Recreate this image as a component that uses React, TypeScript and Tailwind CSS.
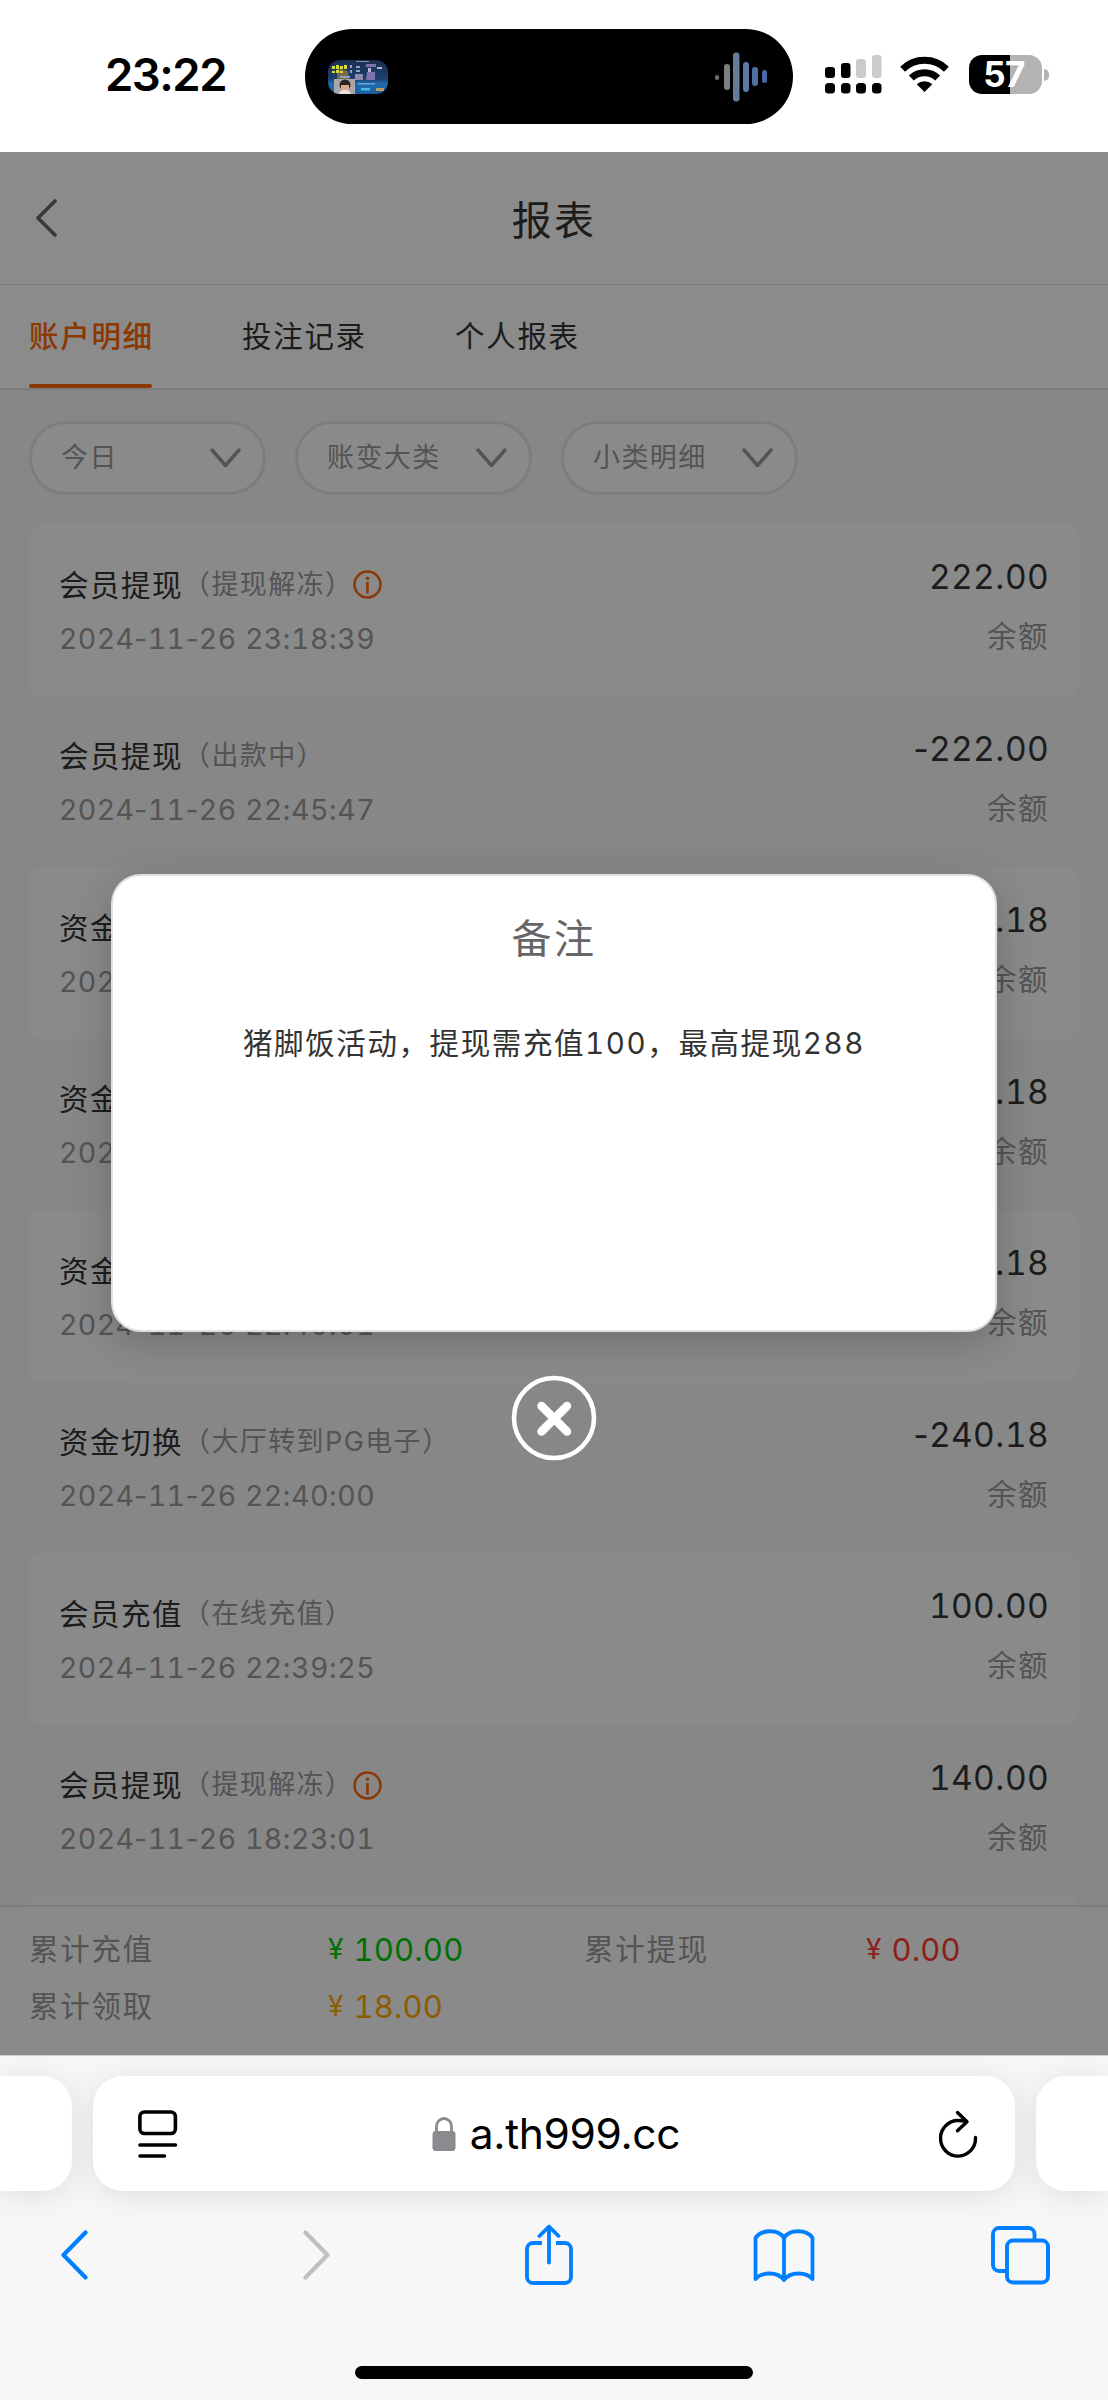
import { useState } from "react";

interface RecordItem {
  id: string;
  type: string;
  detail: string;
  time: string;
  amount: string;
  hasNote?: boolean;
}

interface SummaryItem {
  id: string;
  label: string;
  value: string;
  color: string;
}

const TABS = ["账户明细", "投注记录", "个人报表"];

const FILTERS = ["今日", "账变大类", "小类明细"];

const RECORDS: RecordItem[] = [
  { id: "1", type: "会员提现", detail: "（提现解冻）", time: "2024-11-26 23:18:39", amount: "222.00", hasNote: true },
  { id: "2", type: "会员提现", detail: "（出款中）", time: "2024-11-26 22:45:47", amount: "-222.00" },
  { id: "3", type: "资金切换", detail: "", time: "2024-11-26 22:43:31", amount: "240.18" },
  { id: "4", type: "资金切换", detail: "", time: "2024-11-26 22:42:10", amount: "-240.18" },
  { id: "5", type: "资金切换", detail: "", time: "2024-11-26 22:40:01", amount: "240.18" },
  { id: "6", type: "资金切换", detail: "（大厅转到PG电子）", time: "2024-11-26 22:40:00", amount: "-240.18" },
  { id: "7", type: "会员充值", detail: "（在线充值）", time: "2024-11-26 22:39:25", amount: "100.00" },
  { id: "8", type: "会员提现", detail: "（提现解冻）", time: "2024-11-26 18:23:01", amount: "140.00", hasNote: true },
  { id: "9", type: "", detail: "", time: "", amount: "" },
];

const SUMMARY: SummaryItem[] = [
  { id: "deposit", label: "累计充值", value: "100.00", color: "text-[#00cc0a]" },
  { id: "withdraw", label: "累计提现", value: "0.00", color: "text-[#ff3b30]" },
  { id: "bonus", label: "累计领取", value: "18.00", color: "text-[#ffa800]" },
];

// Digits share one width, separators keep their natural one
function Figures({ value }: { value: string }) {
  return value.split(/(\d+)/).map((part, index) => (
    <span key={index} className={/\d/.test(part) ? "tabular-nums" : "normal-nums"}>
      {part}
    </span>
  ));
}

function StatusBar() {
  return (
    <div className="flex h-[152px] items-start bg-white text-black">
      <div className="w-[305px] pt-[49px] pl-[105px] text-[45.500px] leading-[52px] font-semibold tracking-[-1.500px]">
        23:22
      </div>

      {/* Dynamic island */}
      <div className="mt-[29px] flex h-[95px] w-[488px] items-center justify-between rounded-full bg-black pr-[25px] pl-[23px]">
        <svg width="60" height="34" viewBox="0 0 60 34">
          <defs>
            <clipPath id="thumb">
              <rect width="60" height="34" rx="12" />
            </clipPath>
            <linearGradient id="thumbBg" x1="0" y1="0" x2="0" y2="1">
              <stop offset="0" stopColor="#1b2f50" />
              <stop offset="0.55" stopColor="#1d3f6d" />
              <stop offset="0.7" stopColor="#1f6bae" />
              <stop offset="1" stopColor="#1b5f9c" />
            </linearGradient>
          </defs>
          <g clipPath="url(#thumb)">
            <rect width="60" height="34" fill="url(#thumbBg)" />
            <rect x="28" y="1" width="13" height="1" fill="#7b93b3" />
            <path d="M10 8l10 3 1 8H9z" fill="#756a4b" />
            <path d="M4 6h3v3H4zM8 5h3v4H8zM12 6h3v3h-3zM16 5h3v4h-3zM4 11h3v2H4zM8 10h3v3H8zM12 11h3v2h-3z" fill="#d5dc35" />
            <path d="M22 5h2v3h-2zM22 10h2v3h-2zM28 6h4v2h-4zM28 10h4v2h-4zM12 16h10v2H12z" fill="#8fa3bf" />
            <path d="M27 14h8v6h-8z" fill="#8e8aa8" />
            <path d="M38 4h10v3H38zM39 12h8v8h-9z" fill="#7f72ab" />
            <path d="M40 8h3v4h-3zM49 7h5v2h-5z" fill="#b7b3cf" />
            <rect x="6" y="19" width="21" height="15" fill="#aaa5a6" />
            <circle cx="17" cy="25" r="5.500" fill="#2f2424" />
            <path d="M13 25h8v4a4 4 0 0 1-8 0z" fill="#dba890" />
            <path d="M11 34a6 4 0 0 1 12 0z" fill="#ebe3e1" />
            <rect x="30" y="23" width="17" height="1.500" fill="#6aa6d8" />
            <rect x="33" y="28" width="9" height="2.500" fill="#4db4ea" />
            <rect x="48" y="28" width="8" height="3" fill="#b99a63" />
          </g>
        </svg>
        <svg width="53" height="50" viewBox="0 0 53 50">
          <rect x="0" y="23" width="4" height="5" rx="2" fill="#6d7276" />
          <rect x="9" y="12" width="6" height="26" rx="3" fill="#788084" />
          <rect x="18" y="0.500" width="6.500" height="49" rx="3" fill="#667c98" />
          <rect x="28" y="10" width="6" height="30" rx="3" fill="#5c7aa6" />
          <rect x="37" y="15" width="6" height="19" rx="3" fill="#506f9f" />
          <rect x="47" y="18" width="5" height="13" rx="2.500" fill="#4868a5" />
        </svg>
      </div>

      <svg className="mt-[54px] ml-[32px]" width="57" height="40" viewBox="0 0 57 40">
        <rect x="0" y="13" width="10" height="11" rx="3" />
        <rect x="16" y="9" width="9.500" height="15" rx="3" />
        <rect x="31" y="5" width="10" height="19" rx="3" fill="#cbcbcb" />
        <rect x="47" y="1" width="9.500" height="23" rx="3" fill="#cbcbcb" />
        <rect x="0" y="29" width="10" height="10.500" rx="3.500" />
        <rect x="16" y="29" width="9.500" height="10.500" rx="3.500" />
        <rect x="31" y="29" width="10" height="10.500" rx="3.500" />
        <rect x="47" y="29" width="9.500" height="10.500" rx="3.500" />
      </svg>

      <svg className="mt-[56px] ml-[18px]" width="49" height="36" viewBox="0 0 49 36" fill="none" stroke="#000">
        <path d="M2.600 13.200a31.500 31.500 0 0 1 43.800 0" strokeWidth="7" />
        <path d="M11.300 22a19.200 19.200 0 0 1 26.400 0" strokeWidth="7" />
        <path d="M24.500 36l-7.800-7.800a11.500 11.500 0 0 1 15.600 0z" fill="#000" stroke="none" />
      </svg>

      <div className="mt-[55px] ml-[20px] flex items-center gap-[2px]">
        <div className="flex h-[39px] w-[73px] items-center justify-center rounded-[13px] bg-linear-to-r from-black from-56% to-[#b3b3b3] to-56% pr-[3px] text-[35px] leading-none font-bold tracking-[-0.5px] text-white">
          57
        </div>
        <div className="h-[12px] w-[5px] rounded-r-full bg-[#b3b3b3]" />
      </div>
    </div>
  );
}

function InfoIcon() {
  return (
    <svg width="29" height="29" viewBox="0 0 29 29" fill="none" stroke="#ff6600">
      <circle cx="14.500" cy="14.500" r="13" strokeWidth="2.500" />
      <circle cx="14.500" cy="8.300" r="1.800" fill="#ff6600" stroke="none" />
      <path d="M14.500 13v9.500" strokeWidth="2.600" strokeLinecap="round" />
    </svg>
  );
}

function FilterSelect({ label }: { label: string }) {
  return (
    <div className="flex h-[74px] w-[237px] items-center justify-between rounded-full border-[3px] border-[#e4e4e4] bg-[#fcfcfc] pr-[22px] pl-[29px]">
      <span className="text-[27px] leading-[40px] tracking-[1.400px] text-[#999]">{label}</span>
      <svg width="31" height="20" viewBox="0 0 31 20" fill="none" stroke="#999" strokeWidth="3.500" strokeLinecap="round" strokeLinejoin="round">
        <path d="M2 2l13.500 15.500L29 2" />
      </svg>
    </div>
  );
}

function RecordRow({ item, striped }: { item: RecordItem; striped: boolean }) {
  return (
    <div
      className={`flex h-[171.500px] shrink-0 justify-between rounded-[14px] pr-[30px] pl-[30px] ${
        striped ? "bg-[#fcfcfc]" : ""
      }`}
    >
      <div className="pt-[34px]">
        <div className="flex h-[53.500px] items-center text-[29.500px] tracking-[1.500px]">
          <span className="text-[#333]">{item.type}</span>
          <span className="text-[27px] tracking-[1.400px] text-[#999]">{item.detail}</span>
          {item.hasNote && <InfoIcon />}
        </div>
        <p className="text-[28.500px] leading-[53.500px] tracking-[0.340px] text-[#999]">
          <Figures value={item.time} />
        </p>
      </div>
      <div className="pt-[24px] text-right">
        <p className="text-[33.500px] leading-[58px] tracking-[0.300px] text-[#333]">
          <Figures value={item.amount} />
        </p>
        {item.amount && <p className="text-[29.500px] leading-[60px] tracking-[1.500px] text-[#999]">余额</p>}
      </div>
    </div>
  );
}

function NoteDialog({ onClose }: { onClose: () => void }) {
  return (
    <div className="absolute inset-0 flex flex-col items-center bg-black/45 pt-[722px]">
      <div className="h-[458px] w-[886px] rounded-[30px] border-[2.500px] border-[#e0e0e0] bg-white pt-[35px] text-center shadow-[0_10px_40px_rgba(0,0,0,0.2)]">
        <h2 className="text-[40px] leading-[56px] tracking-[2.500px] text-[#666]">备注</h2>
        <p className="mt-[54px] text-[29.500px] leading-[44px] tracking-[1.600px] text-[#333] tabular-nums">
          猪脚饭活动，提现需充值100，最高提现288
        </p>
      </div>
      <button type="button" className="mt-[43px]" aria-label="关闭" onClick={onClose}>
        <svg width="86" height="86" viewBox="0 0 86 86" fill="none" stroke="#fff" strokeLinecap="round">
          <circle cx="43" cy="43" r="40" strokeWidth="4.600" />
          <path d="M30.500 31l25.500 25.500M56 31L30.500 56.500" strokeWidth="8.500" />
        </svg>
      </button>
    </div>
  );
}

function BrowserBar() {
  return (
    <div className="h-[345px] overflow-hidden border-t border-[#d0d0d0] bg-[#f7f7f7] pt-[20px]">
      {/* Address bar with the neighbouring tabs peeking in */}
      <div className="flex h-[115px] gap-[21px]">
        <div className="w-[72px] rounded-r-[30px] bg-white shadow-[0_4px_32px_rgba(0,0,0,0.1)]" />
        <div className="flex w-[922px] items-center justify-between rounded-[30px] bg-white pr-[37px] pl-[45px] shadow-[0_4px_32px_rgba(0,0,0,0.1)]">
          <svg width="40" height="50" viewBox="0 0 40 50" fill="none" stroke="#000" strokeWidth="3.600" strokeLinecap="round">
            <rect x="1.900" y="3" width="35.500" height="21.500" rx="4.500" />
            <path d="M2 36h35.500M2 47h24.500" />
          </svg>
          <div className="mr-[5px] flex items-center gap-[14px]">
            <svg width="24" height="34" viewBox="0 0 24 34" fill="none">
              <path d="M4.500 15V9.500a7.500 8 0 0 1 15 0V15" stroke="#8a8a8f" strokeWidth="2.800" />
              <rect x="0.500" y="14" width="23" height="20" rx="3.500" fill="#8a8a8f" />
            </svg>
            <span className="text-[42.500px] leading-[50px] tracking-[-0.350px] text-black">a.th999.cc</span>
          </div>
          <svg width="39" height="48" viewBox="0 0 39 48" fill="none" stroke="#000" strokeWidth="3.400" strokeLinecap="round" strokeLinejoin="round">
            <path d="M36.500 27.500A17.500 17.800 0 1 1 19 10.500c3 0 6 .3 8.500 1" />
            <path d="M18.500 2.500l9.500 9.300-9.500 9" />
          </svg>
        </div>
        <div className="w-[72px] rounded-l-[30px] bg-white shadow-[0_4px_32px_rgba(0,0,0,0.1)]" />
      </div>

      <div className="mt-[33px] flex h-[62px] items-center justify-between pr-[57px] pl-[43px]">
        <div className="flex w-[62px] justify-center">
          <svg width="28" height="50" viewBox="0 0 28 50" fill="none" stroke="#007fff" strokeWidth="4.200" strokeLinecap="round" strokeLinejoin="round">
            <path d="M25.500 2.500L3.500 25l22 22.500" />
          </svg>
        </div>
        <div className="flex w-[62px] justify-end pr-[11px]">
          <svg width="28" height="50" viewBox="0 0 28 50" fill="none" stroke="#bfbfbf" strokeWidth="4.200" strokeLinecap="round" strokeLinejoin="round">
            <path d="M2.500 2.500l22 22.500-22 22.500" />
          </svg>
        </div>
        <div className="flex w-[62px] justify-end pr-[4px]">
          <svg width="50" height="62" viewBox="0 0 50 62" fill="none" stroke="#007fff" strokeWidth="3.800" strokeLinejoin="round">
            <path d="M18 19H9a6 6 0 0 0-6 6v28a6 6 0 0 0 6 6h32a6 6 0 0 0 6-6V25a6 6 0 0 0-6-6h-9" />
            <path d="M25 38.500V3M15.500 12L25 2.500 34.500 12" strokeLinecap="round" />
          </svg>
        </div>
        <svg width="62" height="54" viewBox="0 0 62 54" fill="none" stroke="#007fff" strokeWidth="3.800" strokeLinejoin="round" strokeLinecap="round">
          <path d="M31 10C26 1 8 1 2.500 10v41c6-7 22-8 28.500 1 6.500-9 22.500-8 28.500-1V10C54 1 36 1 31 10zM31 10v42" />
        </svg>
        <div className="flex w-[62px] justify-center">
          <svg width="59" height="60" viewBox="0 0 59 60" fill="none" stroke="#007fff" strokeWidth="3.900">
            <rect x="16" y="15.500" width="41" height="42" rx="6" />
            <path d="M43.500 15V9a6 6 0 0 0-6-6H8a6 6 0 0 0-6 6v31a6 6 0 0 0 6 6h8" />
          </svg>
        </div>
      </div>

      <div className="mx-auto mt-[80px] h-[13px] w-[398px] rounded-full bg-black" />
    </div>
  );
}

export default function App() {
  const [activeTab, setActiveTab] = useState(TABS[0]);
  const [noteOpen, setNoteOpen] = useState(true);

  return (
    <div lang="zh-CN" className="h-[2400px] w-[1108px] overflow-hidden bg-white font-[Inter,'Noto_Sans_CJK_SC',sans-serif]">
      <StatusBar />

      <div className="relative flex h-[1903px] flex-col bg-[#f6f6f6]">
        {/* Header */}
        <header className="grid h-[133px] grid-cols-3 items-center border-b border-[#e2e2e2] bg-[#fefefe] pl-[35px]">
          <svg width="23" height="38" viewBox="0 0 23 38" fill="none" stroke="#666" strokeWidth="3.600" strokeLinecap="round" strokeLinejoin="round">
            <path d="M20 2L3 19l17 17" />
          </svg>
          <h1 className="-ml-[35px] pt-[5px] text-center text-[40px] leading-[56px] tracking-[2.300px] text-[#333]">报表</h1>
        </header>

        {/* Tabs */}
        <nav className="flex h-[105px] gap-[89px] border-b-2 border-[#e2e2e2] bg-[#fefefe] pl-[29px]">
          {TABS.map((tab) => (
            <button
              key={tab}
              type="button"
              onClick={() => setActiveTab(tab)}
              className={`flex w-[124px] flex-col justify-between pt-[28px] text-[29.500px] leading-[46px] tracking-[1.700px] whitespace-nowrap ${
                tab === activeTab ? "font-medium text-[#ff6600]" : "text-[#333]"
              }`}
            >
              {tab}
              {tab === activeTab && <span className="h-[4px] w-[123px] rounded-full bg-[#ff6600]" />}
            </button>
          ))}
        </nav>

        {/* Filters */}
        <div className="flex gap-[29px] px-[29px] pt-[31px] pb-[29px]">
          {FILTERS.map((label) => (
            <FilterSelect key={label} label={label} />
          ))}
        </div>

        {/* Records */}
        <div className="flex h-[1381px] flex-col overflow-hidden px-[29px]">
          {RECORDS.map((item, index) => (
            <RecordRow key={item.id} item={item} striped={index % 2 === 0} />
          ))}
        </div>

        {/* Totals */}
        <footer className="grid flex-1 auto-rows-[57px] grid-cols-[299px_256px_282px_1fr] content-start items-center border-t-2 border-[#e0e0e0] bg-[#fcfcfc] pt-[14px] pl-[29px] text-[29.500px] leading-[57px]">
          {SUMMARY.map((item) => (
            <div key={item.id} className="contents">
              <span className="tracking-[1.700px] text-[#999]">{item.label}</span>
              <span className={`flex items-center gap-[10px] tabular-nums ${item.color}`}>
                <span className="text-[28px]">¥</span>
                <span className="text-[31px] tracking-[0.200px]">{item.value}</span>
              </span>
            </div>
          ))}
        </footer>

        {noteOpen && <NoteDialog onClose={() => setNoteOpen(false)} />}
      </div>

      <BrowserBar />
    </div>
  );
}
